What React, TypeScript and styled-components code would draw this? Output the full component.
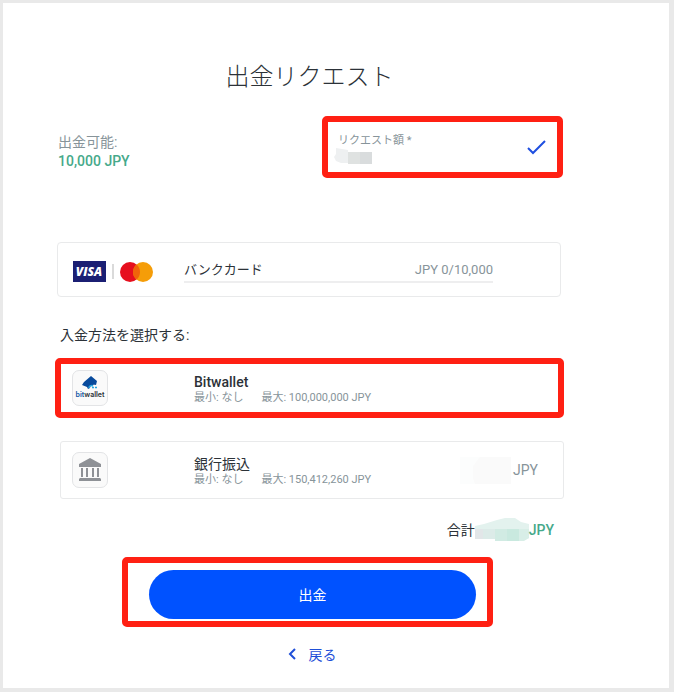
import React from "react";
import styled, { createGlobalStyle } from "styled-components";

const INK = "#2c3238";
const GREY = "#87949a";
const GREEN = "#46a98a";
const BLUE = "#0052ff";
const RED = "#ff2013";
const LINE = "#e9eaeb";

const GlobalStyle = createGlobalStyle`
  * { box-sizing: border-box; }
  body {
    margin: 0;
    background: #fff;
    color: ${INK};
    font-family: Roboto, "Noto Sans CJK JP", sans-serif;
    font-size: 14px;
    line-height: 20px;
  }
  button, input { font: inherit; color: inherit; }
`;

const Page = styled.main`
  display: flex;
  flex-direction: column;
  min-height: 100vh;
  padding: 58px 105px 23px 52px;
  border: solid #e9e9e9;
  border-width: 3px 5px 4px 3px;
`;

const Title = styled.h1`
  margin: 0 0 23px;
  font-size: 24px;
  line-height: 32px;
  font-weight: 300;
  text-align: center;
`;

const AmountRow = styled.section`
  display: flex;
  justify-content: space-between;
  align-items: flex-start;
  margin-bottom: 64px;
`;

const Available = styled.dl`
  margin: 0;
  padding: 17px 0 0 3px;
  line-height: 19px;
  dt { color: ${GREY}; }
  dd { margin: 0; color: ${GREEN}; font-weight: 500; }
`;

const Highlight = styled.div`
  border: 6px solid ${RED};
  border-radius: 5px;
`;

const AmountField = styled(Highlight)`
  display: flex;
  align-items: center;
  justify-content: space-between;
  flex: 0 1 241px;
  min-width: 0;
  height: 62px;
  margin-right: 1px;
  padding: 0 11px 0 10px;
`;

const FieldBody = styled.div`
  display: flex;
  flex-direction: column;
  flex: 1;
  min-width: 0;
  padding-top: 4px;
  position: relative;
`;

const FieldLabel = styled.label`
  color: ${GREY};
  font-size: 11px;
  line-height: 16px;
`;

const FieldInput = styled.input`
  width: 100%;
  height: 16px;
  padding: 0;
  border: 0;
  outline: 0;
  background: transparent;
`;

const FieldMask = styled.svg`
  position: absolute;
  left: -4px;
  bottom: 0;
`;

const CardRow = styled.section`
  display: flex;
  align-items: center;
  gap: 30px;
  height: 55px;
  margin: 0 3px 28px 2px;
  padding: 0 67px 0 14px;
  border: 1px solid ${LINE};
  border-radius: 4px;
`;

const CardBrands = styled.svg`
  flex: none;
  margin-top: 4px;
`;

const CardLine = styled.div`
  display: flex;
  justify-content: space-between;
  flex: 1;
  padding-top: 2px;
  border-bottom: 2px solid #eeeeef;
  font-size: 13px;
  line-height: 22px;
`;

const CardLimit = styled.span`
  color: ${GREY};
`;

const Prompt = styled.h2`
  margin: 0 0 13px 5px;
  font-size: 14px;
  line-height: 20px;
  font-weight: 400;
`;

const Methods = styled.div`
  display: flex;
  flex-direction: column;
  gap: 23px;
  margin-bottom: 21px;
`;

const Method = styled.button<{ $selected?: boolean }>`
  display: flex;
  align-items: center;
  height: ${(p) => (p.$selected ? 60 : 58)}px;
  margin-left: ${(p) => (p.$selected ? 0 : 5)}px;
  padding: 0 25px 0 11px;
  border: ${(p) => (p.$selected ? `6px solid ${RED}` : `1px solid ${LINE}`)};
  border-radius: ${(p) => (p.$selected ? 5 : 3)}px;
  background: #fff;
  text-align: left;
  cursor: pointer;
`;

const Logo = styled.span`
  display: flex;
  flex: none;
  align-items: center;
  justify-content: center;
  width: 36px;
  height: 36px;
  margin-right: 86px;
  border: 1px solid #e3e4e6;
  border-radius: 7px;
  background: #fafafa;
`;

const MethodText = styled.span`
  display: flex;
  flex-direction: column;
  flex: 1;
  padding-top: 2px;
`;

const MethodName = styled.span<{ $medium?: boolean }>`
  line-height: 16px;
  font-weight: ${(p) => (p.$medium ? 500 : 400)};
`;

const Limits = styled.span`
  display: flex;
  gap: 18px;
  color: ${GREY};
  font-size: 11px;
  line-height: 15px;
`;

const MethodAmount = styled.span`
  display: flex;
  align-items: center;
  gap: 2px;
  color: ${GREY};
`;

const Total = styled.p`
  display: flex;
  align-items: center;
  justify-content: flex-end;
  height: 20px;
  margin: 0 0 17px;
  padding-right: 10px;
`;

const TotalCurrency = styled.span`
  color: ${GREEN};
  font-weight: 500;
`;

const SubmitFrame = styled(Highlight)`
  display: flex;
  height: 70px;
  margin: 0 71px 18px 67px;
  padding: 7px 11px 2px 21px;
`;

const Submit = styled.button`
  flex: 1;
  border: 0;
  border-radius: 25px;
  background: ${BLUE};
  color: #fff;
  cursor: pointer;
`;

const Back = styled.a`
  display: flex;
  align-items: center;
  align-self: center;
  gap: 12px;
  margin-left: 5px;
  color: #1f4fd8;
  text-decoration: none;
`;

const CheckIcon = () => (
  <svg width="19" height="16" viewBox="0 0 19 16" fill="none" aria-hidden="true">
    <path d="M1 9l5 5L18 2" stroke="#1f4fe0" strokeWidth="2" />
  </svg>
);

const BankIcon = () => (
  <svg width="22" height="24" viewBox="0 0 22 24" fill="#8e9196" aria-hidden="true">
    <path d="M11 0l11 6v3H0V6zM2 10h2v9H2zM7 10h2v9H7zM13 10h2v9h-2zM18 10h2v9h-2zM1 20h20l1 1v2H0v-2z" />
  </svg>
);

const BitwalletLogo = () => (
  <svg width="34" height="34" viewBox="0 0 34 34" aria-label="bitwallet">
    <path d="M18 5l6 5-1 4c-3-1-6 0-6 3l-2 1-1-2-5-2 2-3z" fill="#084a9c" />
    <path d="M16 17c0-2 2-3 4-2" stroke="#27a5df" strokeWidth="1.500" fill="none" />
    <path d="M19 16.500h6" stroke="#27a5df" strokeWidth="1.500" strokeDasharray="2 1" fill="none" />
    <text x="17" y="26" textAnchor="middle" fontFamily="Inter, sans-serif" fontSize="7" fontWeight="600" fill="#2c3238">
      <tspan fill="#1556a4">bit</tspan>wallet
    </text>
  </svg>
);

export default function App() {
  return (
    <>
      <GlobalStyle />
      <Page>
        <Title>出金リクエスト</Title>

        <AmountRow>
          <Available>
            <dt>出金可能:</dt>
            <dd>10,000 JPY</dd>
          </Available>
          <AmountField>
            <FieldBody>
              <FieldLabel htmlFor="amount">リクエスト額 *</FieldLabel>
              <FieldInput id="amount" inputMode="decimal" />
              <FieldMask width="40" height="17" viewBox="0 0 40 17" aria-hidden="true">
                <path d="M2 0l12 2v13H7l-5-2-2-4 2-3z" fill="#eef0f1" />
                <path d="M14 4h12v12H14z" fill="#dfe2e1" />
                <path d="M26 4h12v12H26z" fill="#d9dcdd" />
              </FieldMask>
            </FieldBody>
            <CheckIcon />
          </AmountField>
        </AmountRow>

        <CardRow>
          <CardBrands width="82" height="22" viewBox="0 0 82 22" aria-label="VISA, Mastercard">
            <rect x="1" y="0" width="33" height="21" fill="#1b1f73" />
            <text x="17" y="15" textAnchor="middle" fontFamily="Open Sans, sans-serif" fontSize="12" fontWeight="800" fontStyle="italic" fill="#fff">VISA</text>
            <path d="M41 3v15" stroke="#b5b5b5" />
            <circle cx="58" cy="11" r="10" fill="#e60f1e" />
            <circle cx="71" cy="11" r="10" fill="#f59d08" />
            <path d="M64.500 3.400a10 10 0 0 1 0 15.200a10 10 0 0 1 0-15.200z" fill="#f0640a" />
          </CardBrands>
          <CardLine>
            <span>バンクカード</span>
            <CardLimit>JPY 0/10,000</CardLimit>
          </CardLine>
        </CardRow>

        <Prompt>入金方法を選択する:</Prompt>

        <Methods>
          <Method type="button" $selected aria-pressed="true">
            <Logo><BitwalletLogo /></Logo>
            <MethodText>
              <MethodName $medium>Bitwallet</MethodName>
              <Limits>
                <span>最小: なし</span>
                <span>最大: 100,000,000 JPY</span>
              </Limits>
            </MethodText>
          </Method>
          <Method type="button" aria-pressed="false">
            <Logo><BankIcon /></Logo>
            <MethodText>
              <MethodName>銀行振込</MethodName>
              <Limits>
                <span>最小: なし</span>
                <span>最大: 150,412,260 JPY</span>
              </Limits>
            </MethodText>
            <MethodAmount>
              <svg width="51" height="27" viewBox="0 0 51 27" aria-hidden="true">
                <path d="M0 0h20v27H0z" fill="#fcfdfd" />
                <path d="M20 0h31v27H15l-2-6V9z" fill="#fafafa" />
              </svg>
              JPY
            </MethodAmount>
          </Method>
        </Methods>

        <Total>
          <span>合計</span>
          <svg width="54" height="24" viewBox="0 0 54 24" aria-hidden="true">
            <path d="M0 8l9-2 13-4 8-2h10l6 4 8 2v14l-7 3H30l-10-2H0z" fill="#e3f2ee" />
            <path d="M0 11h8v10H0z" fill="#e2e6e8" />
            <path d="M8 11h12v10H8z" fill="#dcebe8" />
            <path d="M20 11h12v12H20z" fill="#d1ebe3" />
            <path d="M32 11h12v12H32z" fill="#c9e9df" />
            <path d="M44 11h10v9l-5 3h-5z" fill="#d8eee7" />
          </svg>
          <TotalCurrency>JPY</TotalCurrency>
        </Total>

        <SubmitFrame>
          <Submit type="submit">出金</Submit>
        </SubmitFrame>

        <Back href="#back">
          <svg width="9" height="14" viewBox="0 0 9 14" fill="none" aria-hidden="true">
            <path d="M7 1L2 6l5 5" stroke="#1f4fd8" strokeWidth="2" />
          </svg>
          戻る
        </Back>
      </Page>
    </>
  );
}
